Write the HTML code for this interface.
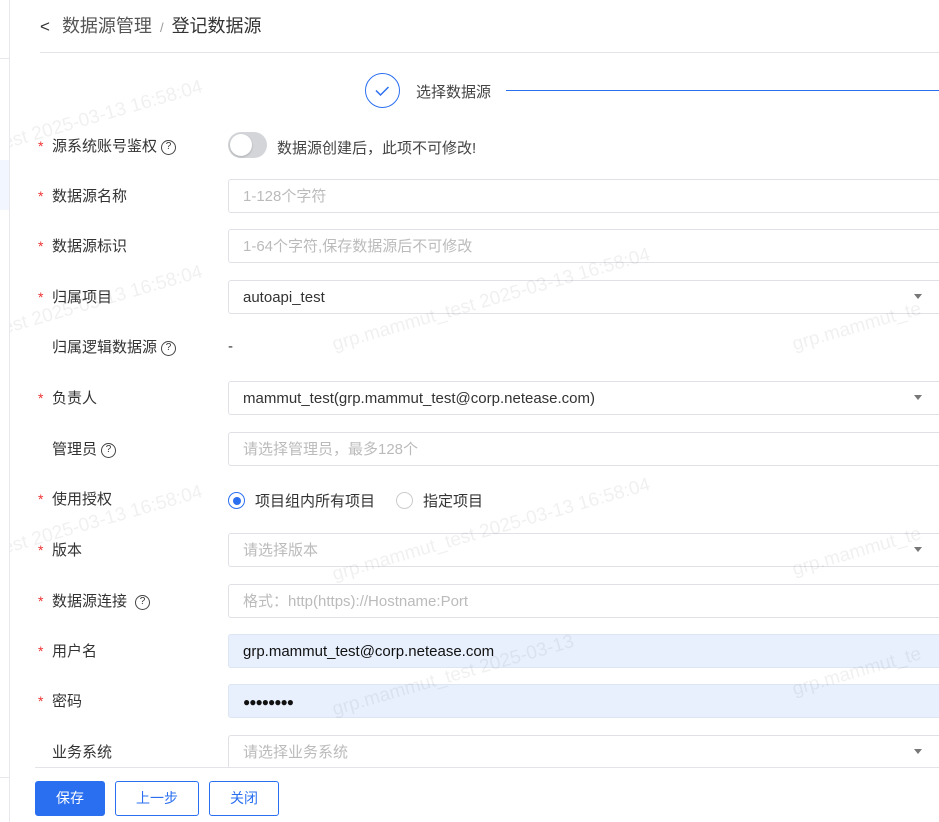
<!DOCTYPE html>
<html><head><meta charset="utf-8"><style>
*{box-sizing:border-box;margin:0;padding:0}
body{width:939px;height:822px;overflow:hidden;background:#fff;font-family:"Liberation Sans","Noto Sans CJK SC",sans-serif;position:relative;color:#333;font-size:15px}
.side{position:absolute;left:0;top:0;width:10px;height:822px;border-right:1px solid #e8e8ec;background:#fff;z-index:3}
.hdr{position:absolute;left:40px;top:14px;font-size:18px;color:#333;line-height:24px}
.hdr .b{color:#555}
.hdr .s{color:#999;font-size:13px;margin:0 8px}
.line{position:absolute;left:40px;right:0;height:1px;background:#e3e4e8}
.step{position:absolute;left:365px;top:73px;width:35px;height:35px;border:1px solid #2a6ff0;border-radius:50%}
.stext{position:absolute;left:416px;top:81px;font-size:15px;color:#444}
.sline{position:absolute;left:506px;top:90px;right:0;height:1px;background:#2a6ff0}
.row{position:absolute;left:0;width:939px;height:34px}
.lab{position:absolute;left:52px;top:8px;font-size:15px;color:#333;line-height:20px;display:flex;align-items:center}
.star{position:absolute;left:38px;top:9px;color:#e33;font-size:14px}
.q{display:inline-block;width:15px;height:15px;border:1.3px solid #444;border-radius:50%;font-size:10px;line-height:12px;text-align:center;margin-left:4px;color:#333}
.inp{position:absolute;left:228px;top:0;width:720px;height:34px;border:1px solid #dfe1e6;border-radius:3px;padding-left:14px;padding-top:1px;line-height:32px;font-size:15px;color:#bbb}
.inp.v{color:#333}
.inp.f{background:#e8f0fe;color:#111;border-color:#dde4f2}
.arr{position:absolute;left:914px;top:14px;border-left:4px solid transparent;border-right:4px solid transparent;border-top:5px solid #777}
.btn{position:absolute;top:781px;height:35px;border:1px solid #2a6ff0;border-radius:3px;color:#2a6ff0;text-align:center;line-height:33px;font-size:14px;background:#fff}
.wm{position:absolute;color:rgba(0,0,0,0.06);font-size:19px;transform:rotate(-16deg);white-space:nowrap;transform-origin:left top}
</style></head><body>
<div class="side"></div>
<div style="position:absolute;left:0;top:58px;width:10px;height:1px;background:#e8e8ec;z-index:4"></div>
<div style="position:absolute;left:0;top:160px;width:9px;height:50px;background:#f2f6fe;z-index:4"></div>
<div style="position:absolute;left:0;top:777px;width:10px;height:1px;background:#e8e8ec;z-index:4"></div>
<div class="hdr"><span style="font-size:17px;margin-right:12px">&lt;</span><span class="b">数据源管理</span><span class="s">/</span>登记数据源</div>
<div class="line" style="top:52px"></div>
<div class="step"><svg width="33" height="33" viewBox="0 0 33 33"><path d="M10 16.5l4.5 4.5 8-8" fill="none" stroke="#2a6ff0" stroke-width="1.5"/></svg></div>
<div class="stext">选择数据源</div><div class="sline"></div>

<div class="row" style="top:129px"><span class="star">*</span><span class="lab">源系统账号鉴权<span class="q">?</span></span>
<div style="position:absolute;left:228px;top:3px;width:39px;height:26px;border-radius:13px;background:#d3d5d9"><div style="position:absolute;left:2px;top:2px;width:22px;height:22px;border-radius:50%;background:#fff;box-shadow:0 1px 2px rgba(0,0,0,.2)"></div></div>
<span style="position:absolute;left:277px;top:8px;color:#444">数据源创建后，此项不可修改!</span></div>

<div class="row" style="top:179px"><span class="star">*</span><span class="lab">数据源名称</span><div class="inp">1-128个字符</div></div>
<div class="row" style="top:229px"><span class="star">*</span><span class="lab">数据源标识</span><div class="inp">1-64个字符,保存数据源后不可修改</div></div>
<div class="row" style="top:280px"><span class="star">*</span><span class="lab">归属项目</span><div class="inp v">autoapi_test</div><span class="arr"></span></div>
<div class="row" style="top:330px"><span class="lab">归属逻辑数据源<span class="q">?</span></span><span style="position:absolute;left:228px;top:8px">-</span></div>
<div class="row" style="top:381px"><span class="star">*</span><span class="lab">负责人</span><div class="inp v">mammut_test(grp.mammut_test@corp.netease.com)</div><span class="arr"></span></div>
<div class="row" style="top:432px"><span class="lab">管理员<span class="q">?</span></span><div class="inp">请选择管理员，最多128个</div></div>
<div class="row" style="top:482px"><span class="star">*</span><span class="lab">使用授权</span>
<span style="position:absolute;left:228px;top:10px;width:17px;height:17px;border:1px solid #2a6ff0;border-radius:50%"><span style="position:absolute;left:3.5px;top:3.5px;width:8px;height:8px;border-radius:50%;background:#2a6ff0"></span></span>
<span style="position:absolute;left:255px;top:8px">项目组内所有项目</span>
<span style="position:absolute;left:396px;top:10px;width:17px;height:17px;border:1px solid #ccc;border-radius:50%"></span>
<span style="position:absolute;left:423px;top:8px">指定项目</span></div>
<div class="row" style="top:533px"><span class="star">*</span><span class="lab">版本</span><div class="inp">请选择版本</div><span class="arr"></span></div>
<div class="row" style="top:584px"><span class="star">*</span><span class="lab">数据源连接 <span class="q" style="margin-left:8px">?</span></span><div class="inp">格式：http(https)://Hostname:Port</div></div>
<div class="row" style="top:634px"><span class="star">*</span><span class="lab">用户名</span><div class="inp f">grp.mammut_test@corp.netease.com</div></div>
<div class="row" style="top:684px"><span class="star">*</span><span class="lab">密码</span><div class="inp f" style="font-size:12px;letter-spacing:-1px">●●●●●●●●</div></div>
<div class="row" style="top:735px"><span class="lab">业务系统</span><div class="inp">请选择业务系统</div><span class="arr"></span></div>

<div style="position:absolute;left:11px;top:767px;width:928px;height:55px;background:#fff"></div>
<div class="line" style="top:767px;left:35px"></div>
<div class="btn" style="left:35px;width:70px;background:#2a6ff0;color:#fff">保存</div>
<div class="btn" style="left:115px;width:84px">上一步</div>
<div class="btn" style="left:209px;width:70px">关闭</div>

<div class="wm" style="left:-5px;top:135px">test 2025-03-13 16:58:04</div>
<div class="wm" style="left:330px;top:335px">grp.mammut_test 2025-03-13 16:58:04</div>
<div class="wm" style="left:-5px;top:320px">test 2025-03-13 16:58:04</div>
<div class="wm" style="left:790px;top:335px">grp.mammut_te</div>
<div class="wm" style="left:330px;top:565px">grp.mammut_test 2025-03-13 16:58:04</div>
<div class="wm" style="left:-5px;top:540px">test 2025-03-13 16:58:04</div>
<div class="wm" style="left:790px;top:560px">grp.mammut_te</div>
<div class="wm" style="left:330px;top:700px">grp.mammut_test 2025-03-13</div>
<div class="wm" style="left:790px;top:680px">grp.mammut_te</div>
</body></html>
